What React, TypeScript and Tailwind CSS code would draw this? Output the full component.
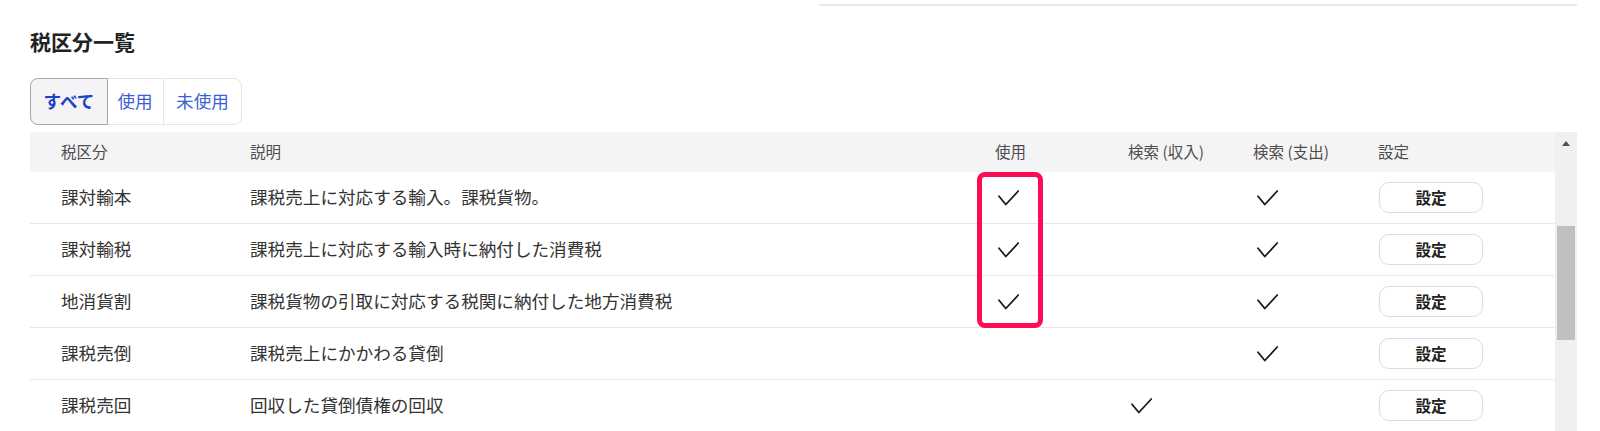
import React from 'react';

type Row = {
  code: string;
  desc: string;
  use: boolean;
  income: boolean;
  expense: boolean;
};

const rows: Row[] = [
  { code: '課対輸本', desc: '課税売上に対応する輸入。課税貨物。', use: true, income: false, expense: true },
  { code: '課対輸税', desc: '課税売上に対応する輸入時に納付した消費税', use: true, income: false, expense: true },
  { code: '地消貨割', desc: '課税貨物の引取に対応する税関に納付した地方消費税', use: true, income: false, expense: true },
  { code: '課税売倒', desc: '課税売上にかかわる貸倒', use: false, income: false, expense: true },
  { code: '課税売回', desc: '回収した貸倒債権の回収', use: false, income: true, expense: false },
];

const cols = 'grid grid-cols-[189px_745px_133px_125px_125px_1fr]';

const CheckMark = ({ className = '' }: { className?: string }) => (
  <svg width={21} height={16} viewBox="0 0 21 16" fill="none" className={className}>
    <path d="M1 6.2 L7.8 14.5 L20.3 1" stroke="#1c1c1c" strokeWidth="1.8" strokeLinecap="round" strokeLinejoin="round" />
  </svg>
);

export default function App() {
  return (
    <div className="w-[1600px] h-[431px] overflow-hidden bg-white font-['Noto_Sans_CJK_JP',sans-serif] text-[#333]">
      {/* bottom edge of the card above */}
      <div className="flex justify-end pr-[23px]">
        <div className="w-[758px] h-[6px] border-b-2 border-[#e7e7e7]" />
      </div>

      <div className="pl-[30px] pr-[23px]">
        <h2 className="mt-[20px] text-[21px] leading-[30px] font-bold text-[#222]">税区分一覧</h2>

        {/* filter tabs */}
        <div className="mt-[22px] flex h-[47px] w-[212px] rounded-[8px] border border-[#e5e5e5]">
          <button className="-m-px flex h-[47px] w-[78px] items-center justify-center rounded-l-[8px] border border-[#a9a9a9] bg-[#f5f3f5] text-[17.6px] font-bold text-[#1c43c6]">
            すべて
          </button>
          <button className="flex w-[57px] items-center justify-center border-r border-[#e5e5e5] text-[17.6px] text-[#3a60d4]">
            使用
          </button>
          <button className="flex flex-1 items-center justify-center text-[17.6px] text-[#3a60d4]">
            未使用
          </button>
        </div>

        {/* table + scrollbar */}
        <div className="mt-[7px] flex">
          <div className="relative w-[1525px]">
            <div className={`${cols} h-[40px] items-center bg-[#f5f4f5] text-[15.5px] text-[#4d4d4d]`}>
              <div className="pl-[31px]">税区分</div>
              <div className="pl-[31px]">説明</div>
              <div className="pl-[31px]">使用</div>
              <div className="pl-[31px]">検索 (収入)</div>
              <div className="pl-[31px]">検索 (支出)</div>
              <div className="pl-[31px]">設定</div>
            </div>

            {rows.map((r) => (
              <div key={r.code} className={`${cols} h-[52px] items-center border-b border-[#e8e8e8] text-[17.6px]`}>
                <div className="pl-[31px]">{r.code}</div>
                <div className="pl-[31px] whitespace-nowrap">{r.desc}</div>
                <div className="pl-[34px]">{r.use && <CheckMark />}</div>
                <div className="pl-[34px]">{r.income && <CheckMark />}</div>
                <div className="pl-[35px]">{r.expense && <CheckMark />}</div>
                <div className="pl-[32px]">
                  <button className="flex h-[31px] w-[104px] items-center justify-center rounded-[10px] border border-[#dcdcdc] bg-white text-[15.5px] font-bold text-[#222]">
                    設定
                  </button>
                </div>
              </div>
            ))}

            {/* highlight annotation */}
            <div className="absolute left-[947px] top-[40px] h-[156px] w-[66px] rounded-[8px] border-[5px] border-[#fc0d56]" />
          </div>

          {/* scrollbar */}
          <div className="flex w-[22px] flex-col items-center bg-[#f0f0f0]">
            <div className="mt-[9px] h-0 w-0 border-x-[4px] border-b-[5px] border-x-transparent border-b-[#505050]" />
            <div className="mt-[80px] h-[114px] w-[18px] bg-[#c0c0c0]" />
          </div>
        </div>
      </div>
    </div>
  );
}
